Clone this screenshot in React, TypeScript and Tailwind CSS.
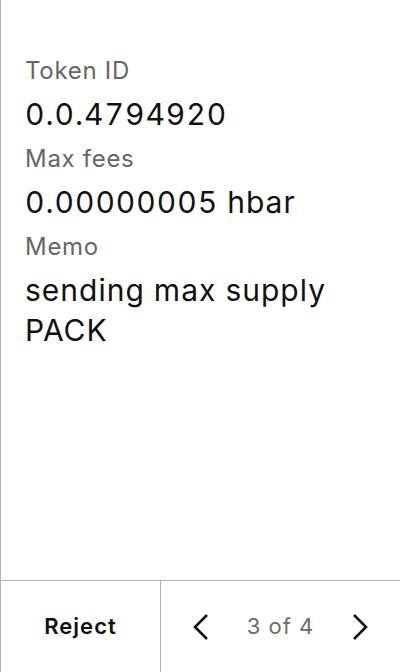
import React from "react";

interface Field {
  label: string;
  value: string;
}

const fields: Field[] = [
  { label: "Token ID", value: "0.0.4794920" },
  { label: "Max fees", value: "0.00000005 hbar" },
  { label: "Memo", value: "sending max supply PACK" },
];

const Chevron: React.FC<{ dir: "left" | "right" }> = ({ dir }) => (
  <svg width="17" height="28" viewBox="0 0 17 28" fill="none">
    <path
      d={dir === "left" ? "M15 2L3 14l12 12" : "M2 2l12 12L2 26"}
      stroke="#111"
      strokeWidth="2.6"
      strokeLinejoin="miter"
    />
  </svg>
);

export default function App() {
  return (
    <div
      className="w-[400px] h-[672px] flex flex-col bg-white border-l border-[#b3b3b3]"
      style={{ fontFamily: "Inter, 'Noto Sans', sans-serif" }}
    >
      {/* Transaction details */}
      <div className="flex-1 flex flex-col gap-[9px] pt-[55px] pl-6 pr-10">
        {fields.map((f) => (
          <div key={f.label} className="flex flex-col">
            <span className="text-[24px] leading-[32px] tracking-[0.7px] text-[#666666]">
              {f.label}
            </span>
            <span className="mt-[7px] text-[30px] leading-[40px] tracking-[1px] tabular-nums text-[#111111]">
              {f.value}
            </span>
          </div>
        ))}
      </div>

      {/* Footer */}
      <div className="h-[92px] flex border-t border-[#b3b3b3]">
        <button className="w-[160px] flex items-center justify-center border-r border-[#b3b3b3] text-[22px] tracking-[1px] font-semibold text-[#111111]">
          Reject
        </button>
        <div className="flex-1 flex items-center justify-between px-[31px]">
          <button className="flex items-center">
            <Chevron dir="left" />
          </button>
          <span className="text-[22px] tracking-[1px] text-[#6b6b6b]">3 of 4</span>
          <button className="flex items-center">
            <Chevron dir="right" />
          </button>
        </div>
      </div>
    </div>
  );
}
